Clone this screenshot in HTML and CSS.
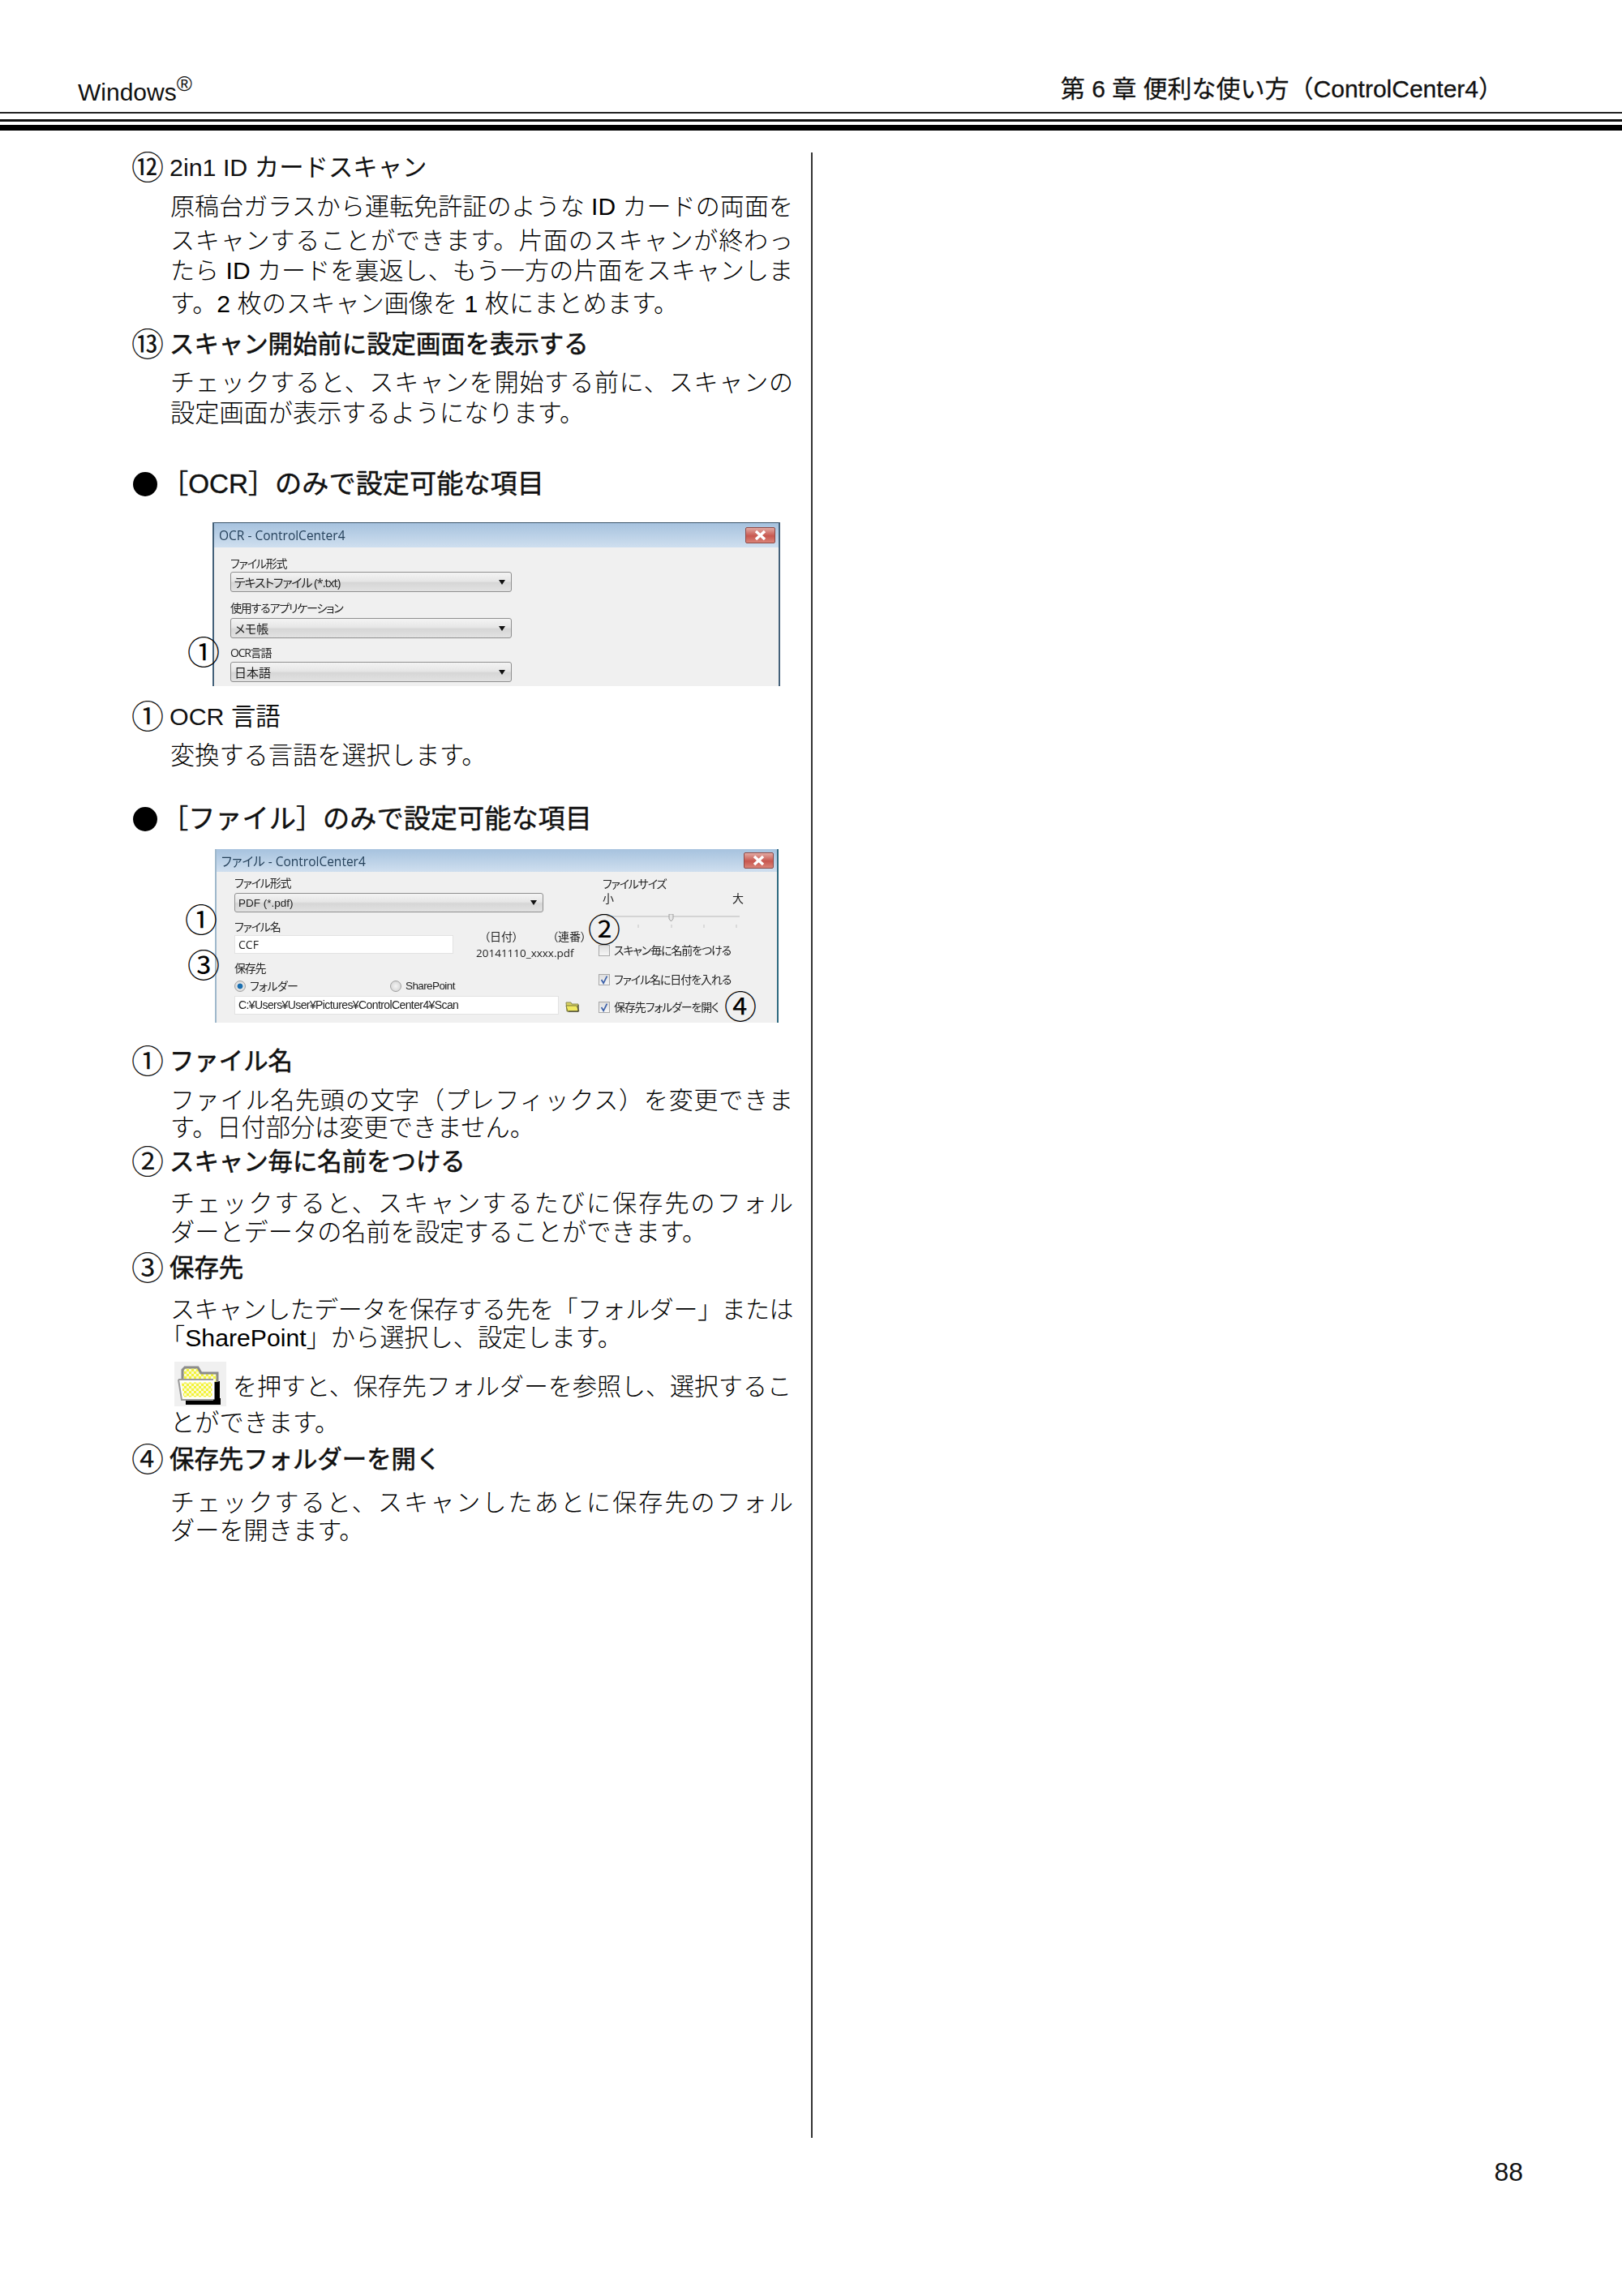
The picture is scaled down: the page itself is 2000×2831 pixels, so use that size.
FILE: index.html
```html
<!DOCTYPE html>
<html lang="ja">
<head>
<meta charset="utf-8">
<title>第 6 章 便利な使い方（ControlCenter4）</title>
<link rel="stylesheet" href="styles.css">
</head>
<body>
<div class="page">
  <header class="top">
    <div class="top-left">Windows<sup>®</sup></div>
    <div class="top-right">第 6 章 便利な使い方（ControlCenter4）</div>
  </header>
  <div class="rule-a"></div>
  <div class="rule-b"></div>
  <div class="rule-c"></div>

  <main class="column">
    <div class="item"><span class="num">⑫</span><span>2in1 ID カードスキャン</span></div>
    <p class="ln just m19">原稿台ガラスから運転免許証のような ID カードの両面を</p>
    <p class="ln just m12">スキャンすることができます。片面のスキャンが終わっ</p>
    <p class="ln just m7">たら ID カードを裏返し、もう一方の片面をスキャンしま</p>
    <p class="ln m11">す。2 枚のスキャン画像を 1 枚にまとめます。</p>

    <div class="item strong m19"><span class="num">⑬</span><span>スキャン開始前に設定画面を表示する</span></div>
    <p class="ln just m18">チェックすると、スキャンを開始する前に、スキャンの</p>
    <p class="ln m8">設定画面が表示するようになります。</p>

    <h2 class="sect m57"><span class="dot"></span><span>［OCR］のみで設定可能な項目</span></h2>

    <div class="shot shot-ocr m32">
      <div class="dlg">
        <div class="titlebar"><span>OCR - ControlCenter4</span><span class="close"><svg viewBox="0 0 37 20" width="37" height="20"><path d="M13 5l11 10M24 5L13 15" stroke="#fff" stroke-width="3.5" fill="none"/></svg></span></div>
        <div class="dlg-body ocr-body">
          <div class="lbl">ファイル形式</div>
          <div class="sel sel-ocr"><span class="cond">テキストファイル (*.txt)</span><i class="caret"></i></div>
          <div class="lbl lbl-mid">使用するアプリケーション</div>
          <div class="sel sel-ocr sel-low"><span>メモ帳</span><i class="caret"></i></div>
          <div class="lbl lbl-third">OCR言語</div>
          <div class="sel sel-ocr sel-last"><span>日本語</span><i class="caret"></i></div>
        </div>
      </div>
      <span class="callout c-ocr1">①</span>
    </div>

    <div class="item m22"><span class="num">①</span><span>OCR 言語</span></div>
    <p class="ln m19">変換する言語を選択します。</p>

    <h2 class="sect m48"><span class="dot"></span><span>［ファイル］のみで設定可能な項目</span></h2>

    <div class="shot shot-file m22">
      <div class="dlg">
        <div class="titlebar tb-file"><span>ファイル - ControlCenter4</span><span class="close"><svg viewBox="0 0 37 20" width="37" height="20"><path d="M13 5l11 10M24 5L13 15" stroke="#fff" stroke-width="3.5" fill="none"/></svg></span></div>
        <div class="dlg-body file-body">
          <div class="file-left">
            <div class="lbl">ファイル形式</div>
            <div class="sel sel-file"><span class="lat">PDF (*.pdf)</span><i class="caret"></i></div>
            <div class="name-row">
              <div>
                <div class="lbl">ファイル名</div>
                <div class="field field-name">CCF</div>
              </div>
              <div class="name-side">
                <div class="side-tags"><span>（日付）</span><span>（連番）</span></div>
                <div class="side-file">20141110_xxxx.pdf</div>
              </div>
            </div>
            <div class="lbl">保存先</div>
            <div class="radios">
              <span class="radio-item"><i class="radio on"></i>フォルダー</span>
              <span class="radio-item radio-sp"><i class="radio"></i><span class="lat">SharePoint</span></span>
            </div>
            <div class="path-row">
              <div class="field field-path lat">C:¥Users¥User¥Pictures¥ControlCenter4¥Scan</div>
              <svg class="mini-folder" viewBox="0 0 18 14" width="18" height="14"><path d="M1 2h6l1 2h8v9H2z" fill="#d8d060" stroke="#8a8a50"/><path d="M1 6h13l3 7H3z" fill="#f0e860" stroke="#77773a"/><path d="M16 5v8H4" stroke="#333" stroke-width="1" fill="none"/></svg>
            </div>
          </div>
          <div class="file-right">
            <div class="lbl size-lbl">ファイルサイズ</div>
            <div class="size-scale"><span>小</span><span>大</span></div>
            <svg class="slider" viewBox="0 0 170 20" width="170" height="20">
              <rect x="2" y="2" width="164" height="2" fill="#d4d4d4"/>
              <path d="M79 0h5v6l-2.500 3-2.500-3z" fill="#e6e6e6" stroke="#a0a0a0"/>
              <path d="M41 13v4M82 13v4M122 13v4M162 13v4" stroke="#c4c4c4"/>
            </svg>
            <div class="chk chk-1"><i class="box"></i>スキャン毎に名前をつける</div>
            <div class="chk chk-2"><i class="box"><svg viewBox="0 0 14 14" width="12" height="12"><path d="M3 7l3 5 5-10" fill="none" stroke="#3a5fa8" stroke-width="2"/></svg></i>ファイル名に日付を入れる</div>
            <div class="chk chk-3"><i class="box"><svg viewBox="0 0 14 14" width="12" height="12"><path d="M3 7l3 5 5-10" fill="none" stroke="#3a5fa8" stroke-width="2"/></svg></i>保存先フォルダーを開く</div>
          </div>
        </div>
      </div>
      <span class="callout c-file1">①</span>
      <span class="callout c-file3">③</span>
      <span class="callout c-file2">②</span>
      <span class="callout c-file4">④</span>
    </div>

    <div class="item strong m32"><span class="num">①</span><span>ファイル名</span></div>
    <p class="ln just m19">ファイル名先頭の文字（プレフィックス）を変更できま</p>
    <p class="ln m4">す。日付部分は変更できません。</p>

    <div class="item strong m11"><span class="num">②</span><span>スキャン毎に名前をつける</span></div>
    <p class="ln just m22">チェックすると、スキャンするたびに保存先のフォル</p>
    <p class="ln m6">ダーとデータの名前を設定することができます。</p>

    <div class="item strong m13"><span class="num">③</span><span>保存先</span></div>
    <p class="ln just tight m22">スキャンしたデータを保存する先を「フォルダー」または</p>
    <p class="ln m5"><span class="hang">「</span>SharePoint」から選択し、設定します。</p>

    <div class="icon-line m14">
      <svg class="folder" viewBox="0 0 64 55" width="64" height="55">
        <defs>
          <pattern id="chk" width="6" height="6" patternUnits="userSpaceOnUse">
            <rect width="6" height="6" fill="#fbfbd0"/>
            <rect width="3" height="3" fill="#f2f23a"/>
            <rect x="3" y="3" width="3" height="3" fill="#f2f23a"/>
          </pattern>
        </defs>
        <rect width="64" height="55" fill="#f0f0f0"/>
        <rect x="14" y="45" width="43" height="8" fill="#000"/>
        <rect x="48" y="24" width="8" height="22" fill="#000"/>
        <path d="M10 25V10l3-3h16l4 7h20v11" fill="url(#chk)" stroke="#8c8c8c" stroke-width="3"/>
        <path d="M7 24h41v21H10z" fill="url(#chk)" stroke="#fff" stroke-width="3"/>
        <path d="M5 22h43M5 22l4 25h39" fill="none" stroke="#9a9a9a" stroke-width="2"/>
      </svg>
      <p class="just icon-text">を押すと、保存先フォルダーを参照し、選択するこ</p>
    </div>
    <p class="ln m6">とができます。</p>

    <div class="item strong m14"><span class="num">④</span><span>保存先フォルダーを開く</span></div>
    <p class="ln just m24">チェックすると、スキャンしたあとに保存先のフォル</p>
    <p class="ln m5">ダーを開きます。</p>
  </main>

  <footer class="folio">88</footer>
</div>
</body>
</html>
```

FILE: styles.css
```css
* { box-sizing: border-box; }
html, body { margin: 0; padding: 0; background: #fff; }
body {
  font-family: "Liberation Sans", "Noto Sans CJK JP", sans-serif;
  color: #111;
}
.page { width: 2000px; height: 2831px; overflow: hidden; }

/* running head */
.top {
  height: 137px;
  padding: 88px 147px 0 96px;
  display: flex;
  justify-content: space-between;
  align-items: flex-start;
}
.top-left { font-size: 30px; line-height: 40px; margin-top: 6px; }
.top-left sup { font-size: 26px; line-height: 0; vertical-align: 12px; }
.top-right { font-size: 30px; line-height: 40px; -webkit-text-stroke: 0.3px #1a1a1a; margin-top: 2px; }
.rule-a { height: 2px; background: #222; margin-top: 1px; }
.rule-b { height: 3px; background: #111; margin-top: 7px; }
.rule-c { height: 7px; background: #000; margin-top: 4px; }

/* main column */
.column {
  width: 1002px;
  height: 2448px;
  margin-top: 27px;
  padding: 3px 0 0 160px;
  border-right: 2px solid #333;
}
.item {
  display: flex;
  align-items: center;
  height: 30px;
  font-size: 30.400px;
  line-height: 30px;
}
.strong { -webkit-text-stroke: 0.6px #111; }
.num {
  flex: 0 0 50px;
  font-size: 40px;
  line-height: 30px;
  margin-left: 2px;
  margin-right: -3px;
  padding-top: 2px;
  -webkit-text-stroke: 0;
}
.ln, .icon-text {
  margin-bottom: 0;
  margin-right: 0;
  margin-left: 50px;
  font-size: 30.200px;
  font-weight: 300;
  line-height: 30px;
  height: 30px;
  width: 768px;
  color: #000;
}
.just { font-size: 30px; text-align: justify; text-align-last: justify; }
.tight { letter-spacing: -0.6px; }
.hang { margin-left: -12px; }
.sect {
  display: flex;
  align-items: center;
  height: 30px;
  margin-bottom: 0;
  margin-left: 4px;
  font-size: 33.200px;
  line-height: 30px;
  font-weight: 400;
  -webkit-text-stroke: 0.4px #111;
}
.dot {
  flex: 0 0 30px;
  height: 30px;
  border-radius: 50%;
  background: #000;
  margin-right: 5px;
}
.icon-line {
  display: flex;
  align-items: flex-end;
  height: 55px;
  margin-left: 55px;
}
.folder { flex: 0 0 64px; display: block; }
.icon-text {
  margin: 0 0 9px 8px;
  width: 689px;
}

/* spacing between PDF-placed lines */
.m4 { margin-top: 4px; } .m5 { margin-top: 5px; } .m6 { margin-top: 6px; }
.m7 { margin-top: 7px; } .m8 { margin-top: 8px; } .m11 { margin-top: 11px; }
.m12 { margin-top: 12px; } .m13 { margin-top: 13px; } .m14 { margin-top: 14px; }
.m18 { margin-top: 18px; } .m19 { margin-top: 19px; } .m22 { margin-top: 22px; }
.m24 { margin-top: 24px; } .m32 { margin-top: 32px; } .m48 { margin-top: 48px; }
.m57 { margin-top: 57px; }

/* screenshots */
.shot { position: relative; }
.shot-ocr { margin-left: 102px; width: 700px; height: 202px; }
.shot-file { margin-left: 105px; width: 695px; height: 214px; }
.dlg {
  height: 100%;
  display: flex;
  flex-direction: column;
  filter: blur(0.45px);
  font-family: "Open Sans", "Noto Sans CJK JP", sans-serif;
  font-feature-settings: "palt";
  font-size: 14px;
  color: #222;
  border-left: 2px solid #44617a;
  border-right: 2px solid #44617a;
  overflow: hidden;
}
.shot-file .dlg { border-left-color: #9fb8cc; border-right-color: #2f6a80; }
.titlebar {
  flex: 0 0 31px;
  display: flex;
  justify-content: space-between;
  align-items: center;
  padding: 0 4px 0 6px;
  font-size: 15.500px;
  color: #24405a;
  background: linear-gradient(#a6c2de, #cfdfef);
  border-top: 1px solid #39536a;
}
.tb-file { flex-basis: 28px; border-top: 0; padding-left: 6px; }
.close {
  width: 37px;
  height: 20px;
  display: block;
  border: 1px solid #8f4a46;
  border-radius: 2px;
  background: linear-gradient(#e2a9a2, #c8574f 55%, #da8478);
}
.close svg { display: block; margin: -1px; }
.dlg-body { flex: 1; background: #f0f0f0; }
.ocr-body { padding: 11px 0 0 20px; }
.lbl { height: 18px; line-height: 18px; font-size: 14px; letter-spacing: -1.2px; white-space: nowrap; }
.lbl-mid { margin-top: 11px; margin-bottom: 3px; }
.lbl-third { margin-top: 9px; }
.sel {
  height: 25px;
  margin-top: 1px;
  padding: 0 7px 0 4px;
  display: flex;
  justify-content: space-between;
  align-items: center;
  border: 1px solid #8f8f8f;
  border-radius: 3px;
  background: linear-gradient(#f4f4f4, #e6e6e6 45%, #d6d6d6 55%, #e2e2e2);
  font-size: 15px;
}
.sel-ocr { width: 347px; }
.sel-low { margin-top: 0; }
.sel-last { margin-top: 2px; }
.cond { letter-spacing: -1.1px; }
.lat { font-family: "Liberation Sans", sans-serif; font-size: 13.500px; }
.caret {
  width: 0;
  height: 0;
  border-left: 4px solid transparent;
  border-right: 4px solid transparent;
  border-top: 6px solid #111;
}
.file-body { display: flex; padding-left: 22px; }
.file-left { flex: 0 0 449px; padding-top: 5px; }
.sel-file { width: 381px; margin-top: 3px; height: 24px; }
.name-row { display: flex; margin-top: 9px; height: 51px; }
.field {
  background: #fff;
  border: 1px solid #e2e2e2;
  padding-left: 4px;
  font-size: 14px;
  line-height: 21px;
  height: 23px;
}
.field-name { width: 270px; margin-top: 1px; }
.field-path { width: 400px; letter-spacing: -0.6px; }
.name-side { margin: 11px 0 0 28px; width: 136px; }
.side-tags { display: flex; justify-content: space-between; height: 20px; padding-left: 10px; line-height: 20px; font-size: 14px; }
.side-file { height: 20px; line-height: 20px; font-size: 13.500px; white-space: nowrap; }
.radios { display: flex; height: 16px; margin-top: 5px; font-size: 14px; line-height: 16px; letter-spacing: -0.6px; }
.radio-item { display: flex; align-items: center; width: 192px; }
.radio {
  width: 14px;
  height: 14px;
  margin-right: 5px;
  border-radius: 50%;
  border: 1px solid #a0a0a0;
  background: radial-gradient(#f4f4f4, #cfcfcf);
}
.radio.on { background: radial-gradient(#1b6fb0 35%, #e8e8e8 45%, #c8c8c8); }
.path-row { display: flex; align-items: center; margin-top: 4px; }
.mini-folder { margin-left: 8px; margin-top: 3px; }
.file-right { flex: 1; padding-top: 6px; }
.size-lbl { margin-left: 5px; }
.size-scale {
  display: flex;
  justify-content: space-between;
  width: 174px;
  margin-left: 5px;
  height: 18px;
  line-height: 18px;
  font-size: 14px;
}
.slider { display: block; margin: 10px 0 0 8px; height: 20px; }
.chk { display: flex; align-items: center; height: 14px; font-size: 14px; letter-spacing: -1.1px; line-height: 14px; white-space: nowrap; }
.chk-1 { margin-top: 18px; }
.chk-2 { margin-top: 22px; }
.chk-3 { margin-top: 20px; }
.box {
  flex: 0 0 14px;
  height: 14px;
  margin-right: 5px;
  border: 1px solid #a8a8a8;
  background: linear-gradient(#dedede, #f6f6f6);
  display: block;
}
.box svg { display: block; }
.callout {
  position: absolute;
  width: 40px;
  height: 40px;
  font-family: "Noto Sans CJK JP", sans-serif;
  font-size: 40px;
  line-height: 40px;
  text-align: center;
  color: #000;
}
.c-ocr1 { left: -31px; top: 138px; }
.c-file1 { left: -37px; top: 65px; }
.c-file3 { left: -34px; top: 121px; }
.c-file2 { left: 460px; top: 77px; }
.c-file4 { left: 628px; top: 172px; }

.folio {
  margin-top: 26px;
  padding-right: 122px;
  text-align: right;
  font-size: 32px;
  line-height: 32px;
}
```
